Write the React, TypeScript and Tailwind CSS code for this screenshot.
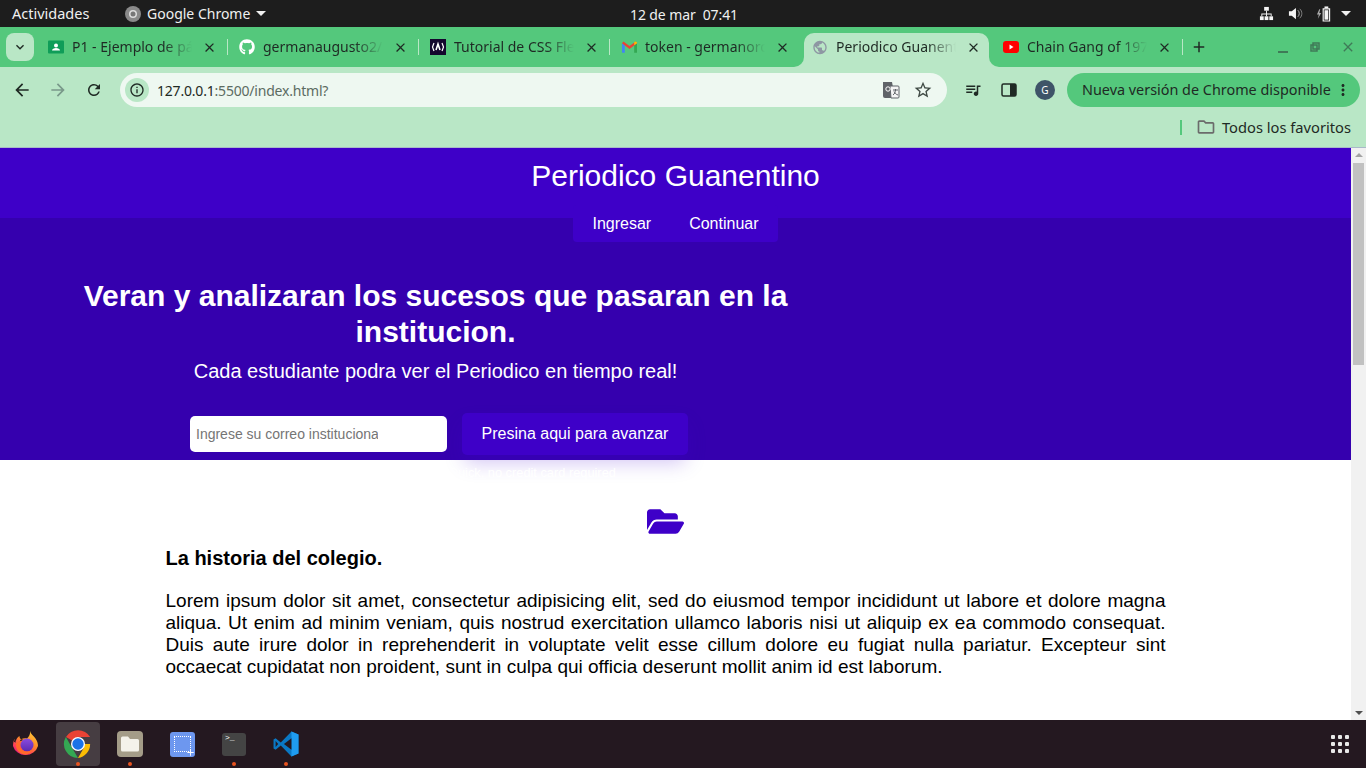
import { FaFolderOpen, FaGithub } from 'react-icons/fa';
import {
  MdAdd,
  MdArrowBack,
  MdArrowForward,
  MdClose,
  MdInfoOutline,
  MdKeyboardArrowDown,
  MdMoreVert,
  MdOutlineFolder,
  MdPublic,
  MdQueueMusic,
  MdRefresh,
  MdStarBorder,
} from 'react-icons/md';
import type { ReactNode } from 'react';

const uiFont = "font-['Noto_Sans',sans-serif]";

function ClassroomIcon() {
  return (
    <svg viewBox="0 0 16 16" className="w-4 h-4">
      <rect x="0" y="1.500" width="16" height="13" rx="1" fill="#0f9d58" />
      <circle cx="8" cy="6.500" r="2" fill="#fff" />
      <path d="M4 11.500c0-1.800 2-2.600 4-2.600s4 .8 4 2.600z" fill="#fff" />
    </svg>
  );
}

function CssIcon() {
  return (
    <svg viewBox="0 0 16 16" className="w-4 h-4">
      <rect width="16" height="16" fill="#14072e" />
      <path d="M4 4 2.500 8 4 12M12 4l1.500 4L12 12" stroke="#fff" strokeWidth="1.200" fill="none" />
      <path d="M6 11 8 5l2 6" stroke="#fff" strokeWidth="1.600" fill="none" />
    </svg>
  );
}

function GmailIcon() {
  return (
    <svg viewBox="0 0 16 12" className="w-[15px] h-[12px]">
      <path d="M0 2v10h3V4z" fill="#4285f4" />
      <path d="M16 2v10h-3V4z" fill="#34a853" />
      <path d="M0 2 1.500 0 8 5l6.500-5L16 2 8 8z" fill="#ea4335" />
      <path d="M13 4l3-2V1l-2-1-1 1z" fill="#fbbc04" />
    </svg>
  );
}

function YoutubeIcon() {
  return (
    <svg viewBox="0 0 16 12" className="w-4 h-3">
      <rect width="16" height="12" rx="3" fill="#ff0000" />
      <path d="M6.500 3.500v5l4-2.500z" fill="#fff" />
    </svg>
  );
}

function Tab({ icon, title, active, noSep }: { icon: ReactNode; title: string; active?: boolean; noSep?: boolean }) {
  return (
    <div className="relative w-[191px] h-[40px] shrink-0 flex items-center">
      {active && (
        <>
          <div className="absolute left-[3px] right-[3px] top-[6px] bottom-0 bg-[#b9e7c6] rounded-t-[10px]" />
          <div className="absolute left-[-7px] bottom-0 w-[10px] h-[10px] bg-[#b9e7c6]">
            <div className="w-full h-full bg-[#54c87c] rounded-br-[10px]" />
          </div>
          <div className="absolute right-[-7px] bottom-0 w-[10px] h-[10px] bg-[#b9e7c6]">
            <div className="w-full h-full bg-[#54c87c] rounded-bl-[10px]" />
          </div>
        </>
      )}
      <div className="relative flex items-center w-full pl-[11px]">
        <div className="w-4 h-4 flex items-center justify-center shrink-0">{icon}</div>
        <span className="ml-[8px] -mt-[1px] w-[120px] overflow-hidden whitespace-nowrap text-[14px] leading-[20px] text-[#1f2a24] [mask-image:linear-gradient(to_right,black_76%,transparent_100%)]">
          {title}
        </span>
        <MdClose className="ml-[10px] w-[15px] h-[15px] text-[#1f2a24]" />
      </div>
      {!noSep && <div className="absolute right-0 top-[12px] w-[1px] h-[16px] bg-[#b9e7c6]" />}
    </div>
  );
}

function TopBar() {
  return (
    <div className="h-[27px] bg-[#1d1d1d] text-[#f0f0f0] text-[14px] flex items-center relative shrink-0">
      <span className="ml-[12px] w-[113px] text-[14.500px]">Actividades</span>
      <svg viewBox="0 0 16 16" className="w-4 h-4">
        <circle cx="8" cy="8" r="8" fill="#8a8a8a" />
        <circle cx="8" cy="8" r="4" fill="#ddd" />
        <circle cx="8" cy="8" r="2.500" fill="#777" />
      </svg>
      <span className="ml-[6px]">Google Chrome</span>
      <div className="ml-[6px] w-0 h-0 border-x-[5px] border-x-transparent border-t-[5px] border-t-[#f0f0f0]" />
      <span className="absolute left-[630px] top-[4px] whitespace-pre tracking-[-0.1px]">12 de mar  07:41</span>
      <div className="ml-auto flex items-center">
        <svg viewBox="0 0 16 16" className="w-[15px] h-[15px]" fill="#f5f5f5">
          <rect x="5.500" y="1" width="5" height="4" />
          <rect x="1" y="11" width="4" height="4" />
          <rect x="6" y="11" width="4" height="4" />
          <rect x="11" y="11" width="4" height="4" />
          <path d="M7.500 5h1v3h5v3h-1V9H8.500v2h-1V9H3.500v2h-1V8h5z" />
        </svg>
        <svg viewBox="0 0 16 16" className="ml-[14px] w-[15px] h-[15px]" fill="#f5f5f5">
          <path d="M1 5.500h3L8.500 2v12L4 10.500H1z" />
          <path d="M10.500 4.500c2 1.800 2 5.200 0 7" stroke="#bbb" fill="none" />
          <path d="M12.500 3c3 2.600 3 7.400 0 10" stroke="#888" fill="none" />
        </svg>
        <svg viewBox="0 0 18 16" className="ml-[13px] w-[17px] h-[16px]" fill="#f5f5f5">
          <path d="M3.500 3 1 8.500h2L2 13l3.500-6h-2l1-4z" fill="#aaa" />
          <rect x="9" y="0" width="4" height="2" />
          <path d="M7 2h8v14H7zm1.200 1.200v11.600h5.600V3.200z" />
          <rect x="9" y="4" width="4" height="10" />
        </svg>
        <div className="ml-[8px] mr-[15px] w-0 h-0 border-x-[5px] border-x-transparent border-t-[5px] border-t-[#f0f0f0]" />
      </div>
    </div>
  );
}

function TabStrip() {
  return (
    <div className="h-[40px] bg-[#54c87c] flex items-center shrink-0">
      <div className="ml-[6px] mr-[3px] w-[28px] h-[28px] rounded-[8px] bg-[#b9e7c6] flex items-center justify-center">
        <MdKeyboardArrowDown className="w-[16px] h-[16px] text-[#1f2a24]" />
      </div>
      <Tab icon={<ClassroomIcon />} title="P1 - Ejemplo de página" />
      <Tab icon={<FaGithub className="w-4 h-4 text-white" />} title="germanaugusto2/periodico" />
      <Tab icon={<CssIcon />} title="Tutorial de CSS Flexbox" />
      <Tab icon={<GmailIcon />} title="token - germanorozco" noSep />
      <Tab icon={<MdPublic className="w-[17px] h-[17px] text-[#8e97a3]" />} title="Periodico Guanentino" active noSep />
      <Tab icon={<YoutubeIcon />} title="Chain Gang of 1974" />
      <MdAdd className="ml-[7px] w-[18px] h-[18px] text-[#1f2a24]" />
      <div className="ml-auto flex items-center">
        <div className="w-[10px] h-[2px] bg-[#3f7a57] mt-[9px]" />
        <svg viewBox="0 0 10 10" className="ml-[22px] w-[10px] h-[10px]" fill="none" stroke="#3f7a57" strokeWidth="1.500">
          <rect x="3" y="1" width="6" height="6" />
          <rect x="1" y="3" width="6" height="6" />
        </svg>
        <MdClose className="ml-[20px] mr-[10px] w-[16px] h-[16px] text-[#3f7a57]" />
      </div>
    </div>
  );
}

function Toolbar() {
  return (
    <div className="h-[43px] pt-[3px] bg-[#b9e7c6] flex items-center shrink-0 text-[#1f2a24]">
      <MdArrowBack className="ml-[12px] w-[20px] h-[20px]" />
      <MdArrowForward className="ml-[16px] w-[20px] h-[20px] text-[#79998a]" />
      <MdRefresh className="ml-[17px] w-[18px] h-[18px]" />
      <div className="ml-[17px] w-[827px] h-[34px] rounded-full bg-[#eef8f1] flex items-center">
        <div className="ml-[5px] w-[24px] h-[24px] rounded-full bg-[#b9e7c6] flex items-center justify-center">
          <MdInfoOutline className="w-[16px] h-[16px]" />
        </div>
        <span className="ml-[8px] text-[14px] tracking-[-0.2px] text-[#1f2a24]">
          127.0.0.1<span className="text-[#5c6b62]">:5500/index.html?</span>
        </span>
        <svg viewBox="0 0 18 18" className="ml-auto w-[18px] h-[18px]">
          <path d="M1 1h9l3 16H3a2 2 0 0 1-2-2z" fill="#5f6368" />
          <path d="M8 5h8a1 1 0 0 1 1 1v10a1 1 0 0 1-1 1H9z" fill="#f5f5f5" stroke="#5f6368" />
          <circle cx="6" cy="8" r="2.200" fill="none" stroke="#fff" />
          <path d="M11 9h5M13.500 8v1c0 2-1 4-2.500 5M12 10.500c.8 1.500 2 3 4 3.500" stroke="#5f6368" fill="none" />
        </svg>
        <MdStarBorder className="ml-[13px] mr-[14px] w-[20px] h-[20px] text-[#3f4a44]" />
      </div>
      <MdQueueMusic className="ml-[17px] w-[18px] h-[18px]" />
      <svg viewBox="0 0 16 16" className="ml-[19px] w-[16px] h-[16px]">
        <rect x="1" y="2" width="14" height="12" rx="1.500" fill="none" stroke="#1f2a24" strokeWidth="1.500" />
        <rect x="9" y="2" width="6" height="12" fill="#1f2a24" />
      </svg>
      <div className="ml-[18px] w-[20px] h-[20px] rounded-full bg-[#3e5468] text-white text-[10px] flex items-center justify-center">
        G
      </div>
      <div className="ml-[12px] w-[293px] h-[34px] rounded-full bg-[#54c87c] flex items-center pl-[15px] text-[14.400px]">
        <span className="whitespace-nowrap">Nueva versión de Chrome disponible</span>
        <MdMoreVert className="ml-auto mr-[8px] w-[18px] h-[18px]" />
      </div>
    </div>
  );
}

function BookmarksBar() {
  return (
    <div className="h-[38px] bg-[#b9e7c6] border-b border-[#a9b9c9] flex items-center justify-end shrink-0 text-[#1f2a24] pb-[3px]">
      <div className="w-[2px] h-[15px] bg-[#54c87c]" />
      <MdOutlineFolder className="ml-[14px] w-[20px] h-[20px] text-[#6b6b6b]" />
      <span className="ml-[6px] mr-[15px] text-[14.700px]">Todos los favoritos</span>
    </div>
  );
}

function Page() {
  return (
    <div className="flex-1 min-w-0 bg-white font-['Liberation_Sans',sans-serif]">
      <header className="h-[70px] bg-[#3e00c8] text-center text-white text-[30px] pt-[10px] leading-[35px]">
        Periodico Guanentino
      </header>
      <nav className="relative z-10 mx-auto -mt-[13px] -mb-[24px] w-[205px] h-[37px] bg-[#3e00c8] rounded-[4px] flex items-center justify-center gap-[38px] text-white text-[16px]">
        <span>Ingresar</span>
        <span>Continuar</span>
      </nav>
      <section className="h-[242px] bg-[#3500ae] text-white">
        <div className="ml-[76px] w-[719px] pt-[60px] text-center">
          <h1 className="text-[30px] leading-[36px] font-bold">
            Veran y analizaran los sucesos que pasaran en la institucion.
          </h1>
          <p className="mt-[10px] text-[20px] leading-[23px]">Cada estudiante podra ver el Periodico en tiempo real!</p>
          <div className="mt-[30px] ml-[114px] flex items-center">
            <input
              readOnly
              placeholder="Ingrese su correo institucional"
              className="w-[257px] h-[36px] bg-white text-black placeholder:text-[#757575] rounded-[5px] pl-[6px] pr-[69px] text-[14px] outline-none"
            />
            <button className="ml-[15px] w-[226px] h-[42px] bg-[#3e00c8] rounded-[5px] text-[16px] text-white shadow-[0_10px_20px_-3px_rgba(64,0,207,0.25)]">
              Presina aqui para avanzar
            </button>
          </div>
          <p className="ml-[372px] mt-[10px] text-left text-[12.800px] leading-[16px] whitespace-nowrap">
            Quick, no credit card required
          </p>
        </div>
      </section>
      <section className="ml-[165.500px] w-[1000px] text-black">
        <div className="mt-[43px] ml-[481px] w-[36px] h-[36px]">
          <FaFolderOpen className="w-[37px] h-[37px] text-[#3e00c8]" />
        </div>
        <h2 className="mt-[8px] text-[20px] leading-[23px] font-bold">La historia del colegio.</h2>
        <p className="mt-[20px] text-[19px] leading-[22px] text-justify">
          Lorem ipsum dolor sit amet, consectetur adipisicing elit, sed do eiusmod tempor incididunt ut labore et dolore
          magna aliqua. Ut enim ad minim veniam, quis nostrud exercitation ullamco laboris nisi ut aliquip ex ea commodo
          consequat. Duis aute irure dolor in reprehenderit in voluptate velit esse cillum dolore eu fugiat nulla
          pariatur. Excepteur sint occaecat cupidatat non proident, sunt in culpa qui officia deserunt mollit anim id est
          laborum.
        </p>
      </section>
    </div>
  );
}

function Scrollbar() {
  return (
    <div className="w-[15px] shrink-0 bg-[#f1f1f1] flex flex-col items-center">
      <div className="mt-[5px] w-0 h-0 border-x-[4px] border-x-transparent border-b-[4px] border-b-[#a3a3a3]" />
      <div className="mt-[6px] w-[11px] h-[202px] bg-[#c1c1c1]" />
      <div className="mt-auto mb-[5px] w-0 h-0 border-x-[4px] border-x-transparent border-t-[4px] border-t-[#505050]" />
    </div>
  );
}

function DockItem({ children, active, dot }: { children: ReactNode; active?: boolean; dot?: boolean }) {
  return (
    <div className={`relative w-[44px] h-[44px] mr-[8px] rounded-[4px] flex items-center justify-center ${active ? 'bg-[#463d42]' : ''}`}>
      {children}
      {dot && <div className="absolute bottom-[0px] left-[20px] w-[4px] h-[4px] rounded-full bg-[#e95420]" />}
    </div>
  );
}

function Dock() {
  return (
    <div className="h-[48px] bg-[#241820] flex items-center pl-[4px] shrink-0">
      <DockItem>
        <svg viewBox="0 0 28 28" className="w-[28px] h-[28px]">
          <defs>
            <linearGradient id="ff" x1="0.85" y1="0" x2="0.25" y2="1">
              <stop offset="0" stopColor="#ffd23a" />
              <stop offset="0.45" stopColor="#ff8a2a" />
              <stop offset="0.8" stopColor="#ff3a5c" />
              <stop offset="1" stopColor="#e31587" />
            </linearGradient>
            <linearGradient id="ffc" x1="0.5" y1="0" x2="0.5" y2="1">
              <stop offset="0" stopColor="#8a4be0" />
              <stop offset="1" stopColor="#5b2bb0" />
            </linearGradient>
          </defs>
          <path d="M18 1c.5 3 3.500 4.500 5.500 7.500 1.800 2.500 2.500 5 2.500 7.500A13 12.500 0 0 1 1 16c0-2.500.5-5 1.500-7 .2 1 .6 1.800 1.300 2.500C4.200 9 5.500 7 7.500 6c0 1.500.5 2.500 1.500 3.200C11 8 13.500 8 15 8.500 17 6.500 18.500 4 18 1z" fill="url(#ff)" />
          <path d="M4 12.500 2.500 9l-.5 3zM9 9.200l2.500.5-4 2z" fill="#241820" />
          <circle cx="15" cy="15" r="6.500" fill="url(#ffc)" />
          <path d="M4 14c1-2 3-3 6-3-1.500 1-2 2.500-2 4 0 3.500 3 6.500 7 6.500 2.500 0 4.500-1 6-3-1 4-5 6.500-9 6-5-.5-8.500-5.500-8-10.500z" fill="#ff6a2a" />
        </svg>
      </DockItem>
      <DockItem active dot>
        <svg viewBox="0 0 48 48" className="w-[32px] h-[32px]">
          <path d="M24 24 6 13.600A21 21 0 0 1 42.200 13.500H24z" fill="#ea4335" />
          <path d="M24 24h18.200A21 21 0 0 1 24 45l9-15.600z" fill="#fbbc04" />
          <path d="M24 45A21 21 0 0 1 5.800 13.500L15 29.500z" fill="#34a853" />
          <circle cx="24" cy="24" r="10.500" fill="#fff" />
          <circle cx="24" cy="24" r="8.500" fill="#1a73e8" />
        </svg>
      </DockItem>
      <DockItem dot>
        <div className="w-[26px] h-[26px] rounded-[4px] bg-[#a49c88] flex items-center justify-center">
          <svg viewBox="0 0 18 16" className="w-[18px] h-[16px]">
            <path d="M0 2a1.500 1.500 0 0 1 1.500-1.500H7L9 3h7.500A1.500 1.500 0 0 1 18 4.500V14a1.500 1.500 0 0 1-1.500 1.500h-15A1.500 1.500 0 0 1 0 14z" fill="#f4f2ea" />
          </svg>
        </div>
      </DockItem>
      <DockItem>
        <div className="relative w-[25px] h-[25px] rounded-[3px] bg-[#6d97ef]">
          <div className="absolute left-[4px] top-[4px] w-[17px] h-[16px] border border-dotted border-white" />
          <MdAdd className="absolute right-[-1px] bottom-[-1px] w-[11px] h-[11px] text-white" />
        </div>
      </DockItem>
      <DockItem dot>
        <div className="w-[24px] h-[23px] rounded-[3px] bg-[#444444] text-white text-[8px] leading-[10px] pl-[3px] font-['Liberation_Mono',monospace]">
          &gt;_
        </div>
      </DockItem>
      <DockItem dot>
        <svg viewBox="0 0 100 100" className="w-[26px] h-[26px]">
          <path d="M71 2 30 44 10 28 2 33v34l8 5 20-16 41 42 27-11V13z" fill="#0a78c4" />
          <path d="M71 2 98 13v74L71 98z" fill="#1f9cf0" />
          <path d="M71 28v44L42 50z" fill="#241820" />
          <path d="M10 38l10 12-10 12z" fill="#241820" />
        </svg>
      </DockItem>
      <div className="ml-auto mr-[17px] grid grid-cols-3 gap-[3px]">
        {Array.from({ length: 9 }).map((_, i) => (
          <div key={i} className="w-[4px] h-[4px] bg-[#e8e8e8] rounded-[1px]" />
        ))}
      </div>
    </div>
  );
}

export default function App() {
  return (
    <div className={`w-[1366px] h-[768px] overflow-hidden flex flex-col ${uiFont}`}>
      <TopBar />
      <TabStrip />
      <Toolbar />
      <BookmarksBar />
      <div className="flex-1 min-h-0 flex overflow-hidden">
        <Page />
        <Scrollbar />
      </div>
      <Dock />
    </div>
  );
}
